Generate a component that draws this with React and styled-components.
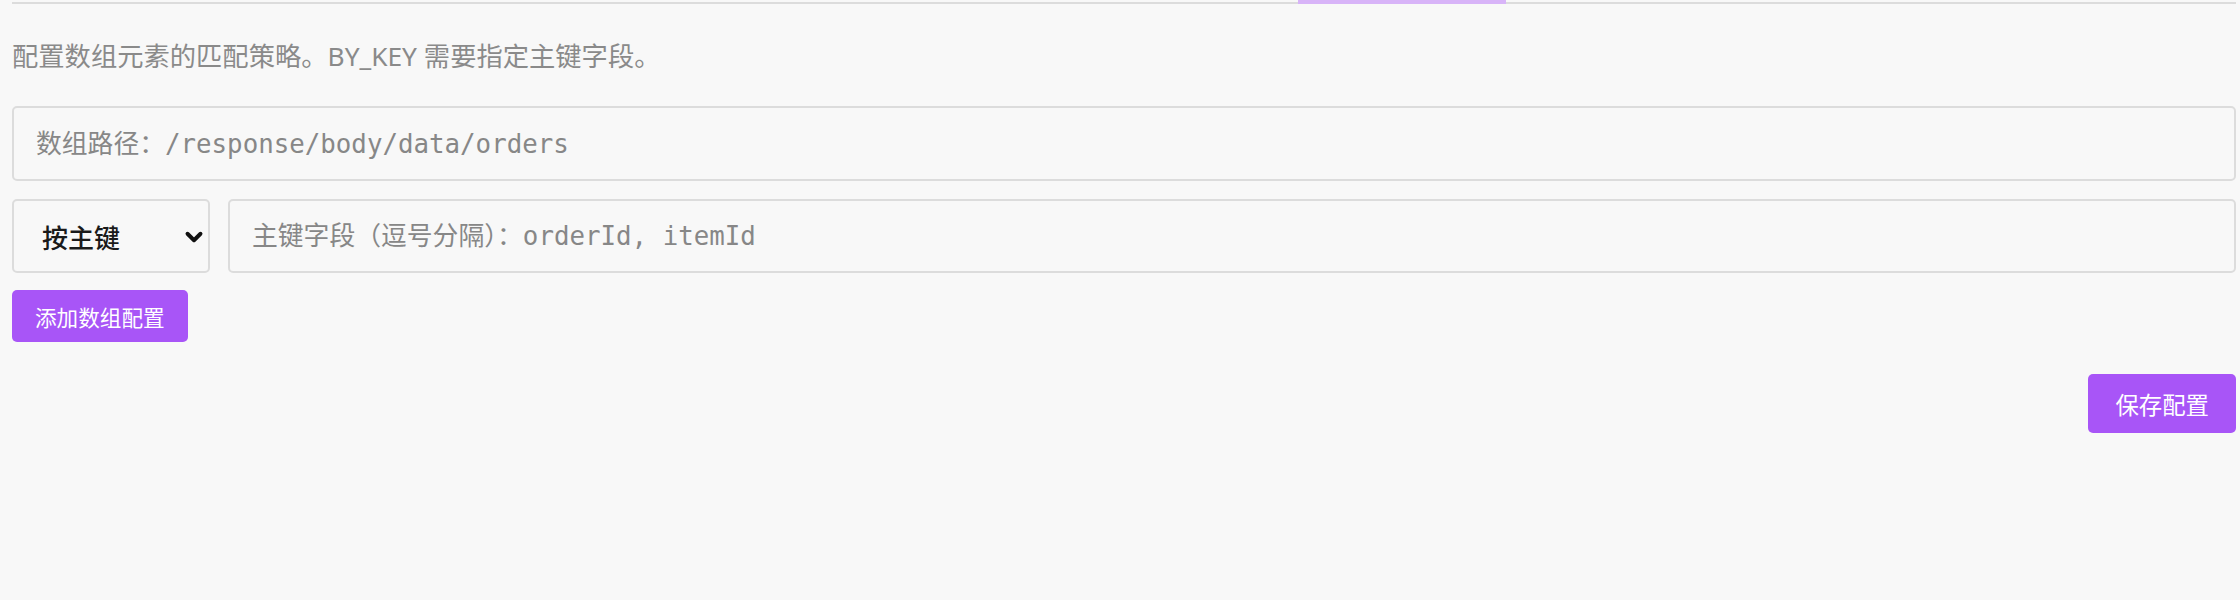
import styled, { createGlobalStyle } from "styled-components"
import { ChevronDown } from "lucide-react"

const GlobalStyle = createGlobalStyle`
  body {
    margin: 0;
    background: #f8f8f8;
  }
`

const Page = styled.div`
  padding: 0 4px 0 12px;
  font-family: "Noto Sans", "Noto Sans CJK SC", sans-serif;
`

const TabTrack = styled.div`
  display: flex;
  height: 4px;
  border-bottom: 2px solid #dcdcdc;
  box-sizing: border-box;
`

const TabIndicator = styled.div`
  margin-left: 1286px;
  width: 208px;
  height: 4px;
  background: #d8b4f8;
`

const Description = styled.p`
  margin: 33px 0 31px;
  font-size: 26.3px;
  line-height: 38px;
  color: #8a8a8a;
`

const Form = styled.div`
  display: flex;
  flex-direction: column;
  gap: 18px;
`

const Row = styled.div`
  display: flex;
  gap: 18px;
`

const TextInput = styled.input`
  flex: 1;
  box-sizing: border-box;
  height: ${props => props.$h || 75}px;
  padding: 0 22px;
  border: 2px solid #dcdcdc;
  border-radius: 5px;
  background: #f8f8f8;
  font-family: "DejaVu Sans Mono", "Noto Sans CJK SC", monospace;
  font-size: 25.8px;
  color: #333;
  outline: none;

  &::placeholder {
    color: #878787;
  }
`

const SelectWrap = styled.div`
  position: relative;
  width: 198px;
  flex: none;
`

const Select = styled.select`
  appearance: none;
  width: 100%;
  height: 74px;
  box-sizing: border-box;
  padding: 0 0 0 28px;
  border: 2px solid #dcdcdc;
  border-radius: 5px;
  background: #f8f8f8;
  font-family: "Noto Sans CJK SC", sans-serif;
  font-size: 26px;
  font-weight: 500;
  color: #1a1a1a;
  outline: none;
`

const Chevron = styled(ChevronDown)`
  position: absolute;
  right: 3px;
  top: 25px;
  pointer-events: none;
  color: #111;
`

const Button = styled.button`
  box-sizing: border-box;
  height: ${props => props.$h}px;
  padding: 0 ${props => props.$px}px;
  border: none;
  border-radius: 5px;
  background: #a855f7;
  color: #fff;
  font-family: "Noto Sans CJK SC", sans-serif;
  font-size: ${props => props.$fs}px;
  cursor: pointer;
`

const AddRow = styled.div`
  display: flex;
  margin-top: -1px;
`

const Footer = styled.div`
  display: flex;
  justify-content: flex-end;
  margin-top: 32px;
`

function App() {
  return (
    <>
      <GlobalStyle />
      <Page>
        <TabTrack>
          <TabIndicator />
        </TabTrack>
        <Description>配置数组元素的匹配策略。BY_KEY 需要指定主键字段。</Description>
        <Form>
          <Row>
            <TextInput placeholder="数组路径：/response/body/data/orders" />
          </Row>
          <Row>
            <SelectWrap>
              <Select defaultValue="BY_KEY">
                <option value="BY_KEY">按主键</option>
                <option value="BY_INDEX">按索引</option>
              </Select>
              <Chevron size={26} strokeWidth={3.6} />
            </SelectWrap>
            <TextInput $h={74} placeholder="主键字段（逗号分隔）：orderId, itemId" />
          </Row>
          <AddRow>
            <Button $h={52} $px={23} $fs={21.6}>添加数组配置</Button>
          </AddRow>
        </Form>
        <Footer>
          <Button $h={59} $px={27} $fs={23.4}>保存配置</Button>
        </Footer>
      </Page>
    </>
  )
}

export default App
